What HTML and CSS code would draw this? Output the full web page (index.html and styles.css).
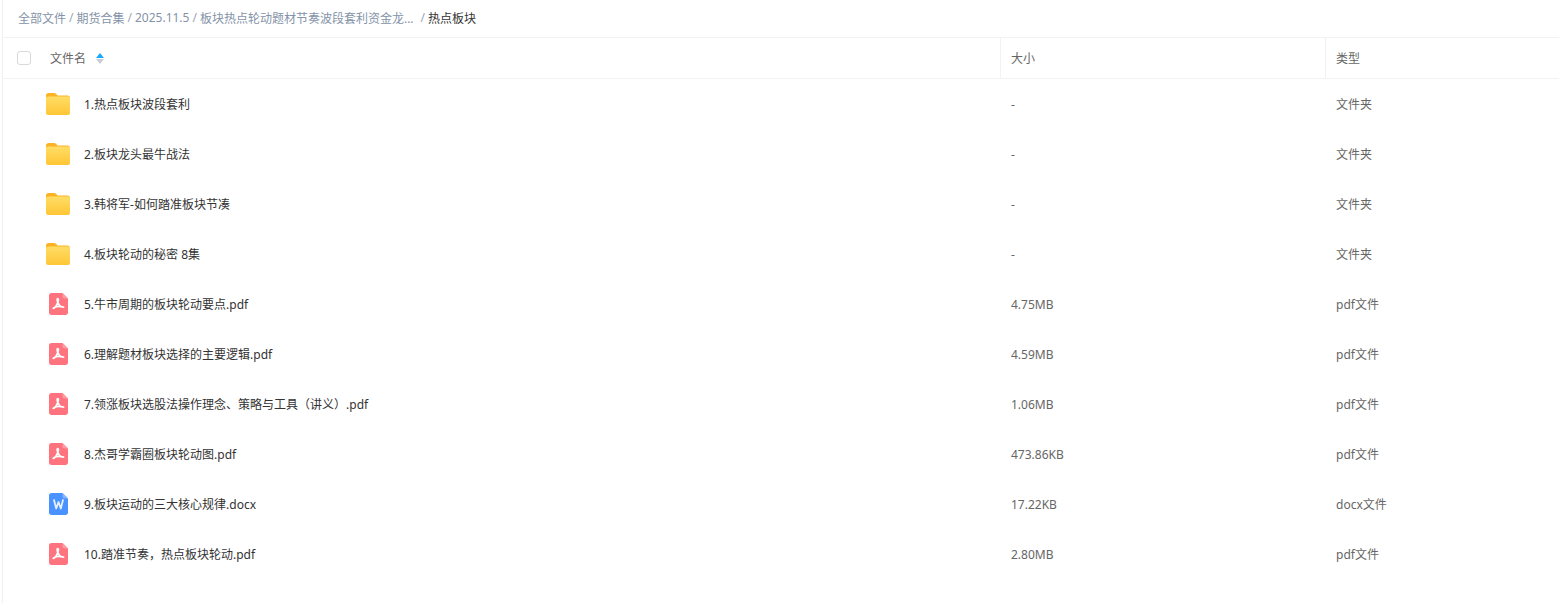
FILE: index.html
```html
<!DOCTYPE html>
<html lang="zh-CN">
<head>
    <meta charset="UTF-8">
    <meta name="viewport" content="width=device-width, initial-scale=1.0">
    <title>热点板块</title>
    <link rel="stylesheet" href="styles.css">
</head>
<body>
    <svg class="defs" width="0" height="0">
        <defs>
            <linearGradient id="folder-front" x1="0" y1="0" x2="0" y2="1">
                <stop offset="0" stop-color="#ffdd66"/>
                <stop offset="1" stop-color="#ffc636"/>
            </linearGradient>
            <symbol id="icon-folder" viewBox="0 0 24 22">
                <path d="M0 2.500C0 1.100 1.100 0 2.500 0h5.600c.8 0 1.400.3 1.900.8L11.600 2.400h9.900C22.900 2.400 24 3.500 24 4.900V8H0z" fill="#fbb325"/>
                <rect x="0" y="3.400" width="24" height="18.600" rx="2" fill="url(#folder-front)"/>
            </symbol>
            <symbol id="icon-pdf" viewBox="0 0 19 22">
                <path d="M2.500 0H13.500l5.500 5.500v14c0 1.400-1.100 2.500-2.500 2.500h-14C1.100 22 0 20.900 0 19.500v-17C0 1.100 1.100 0 2.500 0z" fill="#ff737f"/>
                <path d="M13.500 0l5.500 5.500h-3.500c-1.100 0-2-.9-2-2z" fill="#ff99a2"/>
                <path d="M8.800 5.500c-.9 0-.8 1.300-.3 3 .5 1.600 1.200 3 2.200 4.200 1.100 1 2.500 1.500 3.800 1.500M8.800 5.500c.9 0 .7 1.400.2 3.300-.5 1.800-1.400 3.600-2.500 5-.8 1-1.700 1.700-2.300 1.500M5 14.700c1.800-1.200 4.500-1.900 9.500-.6" fill="none" stroke="#fff" stroke-width="1.700" stroke-linecap="round"/>
            </symbol>
            <symbol id="icon-word" viewBox="0 0 19 22">
                <path d="M2.500 0H13.500l5.500 5.500v14c0 1.400-1.100 2.500-2.500 2.500h-14C1.100 22 0 20.900 0 19.500v-17C0 1.100 1.100 0 2.500 0z" fill="#4a92ff"/>
                <path d="M13.500 0l5.500 5.500h-3.500c-1.100 0-2-.9-2-2z" fill="#82b4ff"/>
                <path d="M5 7l2.200 8.500L9.500 9l2.300 6.500L14 7" fill="none" stroke="#e4efff" stroke-width="1.800" stroke-linejoin="round" stroke-linecap="round"/>
            </symbol>
        </defs>
    </svg>

    <div class="page">
        <!-- Breadcrumb -->
        <div class="crumbs">
            <a>全部文件</a><span class="sep">/</span>
            <a>期货合集</a><span class="sep">/</span>
            <a>2025.11.5</a><span class="sep">/</span>
            <a class="crumb-long">板块热点轮动题材节奏波段套利资金龙...</a><span class="sep sep-wide">/</span>
            <span class="crumb-current">热点板块</span>
        </div>

        <!-- Table head -->
        <div class="table-head">
            <div class="col-name">
                <span class="checkbox"></span>
                <span class="head-label">文件名</span>
                <span class="sorter"><i class="sort-up"></i><i class="sort-down"></i></span>
            </div>
            <div class="col-size">大小</div>
            <div class="col-type">类型</div>
        </div>

        <!-- Rows -->
        <div class="row">
            <div class="col-name"><svg class="icon icon-wide"><use href="#icon-folder"/></svg><span class="file-name">1.热点板块波段套利</span></div>
            <div class="col-size">-</div>
            <div class="col-type">文件夹</div>
        </div>
        <div class="row">
            <div class="col-name"><svg class="icon icon-wide"><use href="#icon-folder"/></svg><span class="file-name">2.板块龙头最牛战法</span></div>
            <div class="col-size">-</div>
            <div class="col-type">文件夹</div>
        </div>
        <div class="row">
            <div class="col-name"><svg class="icon icon-wide"><use href="#icon-folder"/></svg><span class="file-name">3.韩将军-如何踏准板块节凑</span></div>
            <div class="col-size">-</div>
            <div class="col-type">文件夹</div>
        </div>
        <div class="row">
            <div class="col-name"><svg class="icon icon-wide"><use href="#icon-folder"/></svg><span class="file-name">4.板块轮动的秘密 8集</span></div>
            <div class="col-size">-</div>
            <div class="col-type">文件夹</div>
        </div>
        <div class="row">
            <div class="col-name"><svg class="icon"><use href="#icon-pdf"/></svg><span class="file-name">5.牛市周期的板块轮动要点.pdf</span></div>
            <div class="col-size">4.75MB</div>
            <div class="col-type">pdf文件</div>
        </div>
        <div class="row">
            <div class="col-name"><svg class="icon"><use href="#icon-pdf"/></svg><span class="file-name">6.理解题材板块选择的主要逻辑.pdf</span></div>
            <div class="col-size">4.59MB</div>
            <div class="col-type">pdf文件</div>
        </div>
        <div class="row">
            <div class="col-name"><svg class="icon"><use href="#icon-pdf"/></svg><span class="file-name">7.领涨板块选股法操作理念、策略与工具（讲义）.pdf</span></div>
            <div class="col-size">1.06MB</div>
            <div class="col-type">pdf文件</div>
        </div>
        <div class="row">
            <div class="col-name"><svg class="icon"><use href="#icon-pdf"/></svg><span class="file-name">8.杰哥学霸圈板块轮动图.pdf</span></div>
            <div class="col-size">473.86KB</div>
            <div class="col-type">pdf文件</div>
        </div>
        <div class="row">
            <div class="col-name"><svg class="icon"><use href="#icon-word"/></svg><span class="file-name">9.板块运动的三大核心规律.docx</span></div>
            <div class="col-size">17.22KB</div>
            <div class="col-type">docx文件</div>
        </div>
        <div class="row">
            <div class="col-name"><svg class="icon"><use href="#icon-pdf"/></svg><span class="file-name">10.踏准节奏，热点板块轮动.pdf</span></div>
            <div class="col-size">2.80MB</div>
            <div class="col-type">pdf文件</div>
        </div>
    </div>
</body>
</html>
```

FILE: styles.css
```css
html, body {
    margin: 0;
    height: 100%;
    background: #fff;
    overflow: hidden;
}
body {
    font-family: "Noto Sans", "Noto Sans CJK SC", sans-serif;
    font-size: 12px;
    color: #666;
}
.defs {
    position: absolute;
}
.page {
    margin-left: 2px;
    height: 100%;
    border-left: 1px solid #f0f0f0;
}

/* Breadcrumb */
.crumbs {
    display: flex;
    align-items: center;
    height: 35px;
    padding: 0 0 2px 15px;
    border-bottom: 1px solid #f2f2f2;
    color: #8493a8;
    white-space: nowrap;
}
.sep {
    margin: 0 3px;
    color: #9aa5b5;
}
.sep-wide {
    margin-left: 7px;
}
.crumb-current {
    color: #333;
}

/* Table */
.table-head {
    display: flex;
    height: 40px;
    border-bottom: 1px solid #f2f2f2;
    align-items: stretch;
}
.row {
    display: flex;
    height: 50px;
    color: #666;
}
.col-name {
    width: 997px;
    display: flex;
    align-items: center;
}
.col-size {
    width: 314px;
    padding-left: 10px;
    border-left: 1px solid transparent;
    display: flex;
    align-items: center;
}
.col-type {
    flex: 1;
    padding-left: 10px;
    border-left: 1px solid transparent;
    display: flex;
    align-items: center;
}
.table-head .col-size,
.table-head .col-type {
    border-left-color: #f2f2f2;
}

.checkbox {
    width: 12px;
    height: 12px;
    margin-left: 14px;
    border: 1px solid #d9d9d9;
    border-radius: 3px;
}
.head-label {
    margin-left: 19px;
}
.sorter {
    display: flex;
    flex-direction: column;
    gap: 1px;
    margin-left: 10px;
}
.sorter i {
    display: block;
    width: 0;
    height: 0;
    border-left: 4px solid transparent;
    border-right: 4px solid transparent;
}
.sort-up {
    border-bottom: 5px solid #1ea7ff;
}
.sort-down {
    border-top: 5px solid #c9ced6;
}

.icon {
    width: 19px;
    height: 22px;
    margin-left: 46px;
    margin-right: 16px;
}
.icon-wide {
    width: 24px;
    height: 22px;
    margin-left: 43px;
    margin-right: 14px;
}
.file-name {
    color: #333;
    white-space: nowrap;
}
```
